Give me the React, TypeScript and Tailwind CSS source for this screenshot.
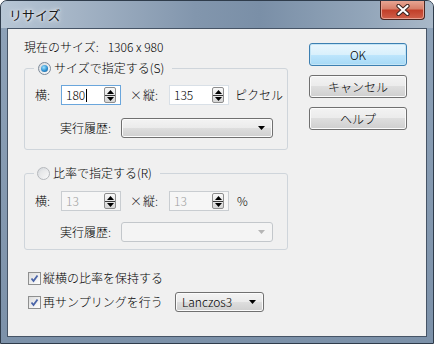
import React from "react";

function Spin() {
  return (
    <div className="w-[12px] h-[16px] flex flex-col border border-[#8d8d8d] rounded-[2px] bg-[linear-gradient(#f8f8f8,#d6d6d6)] shrink-0">
      <div className="h-[7px] flex items-center justify-center">
        <svg width="7" height="4" viewBox="0 0 7 4"><path d="M0 4L3.5 0L7 4Z" fill="#000" /></svg>
      </div>
      <div className="h-[1px] bg-[#3a3a3a]" />
      <div className="h-[6px] flex items-center justify-center">
        <svg width="7" height="4" viewBox="0 0 7 4"><path d="M0 0L3.5 4L7 0Z" fill="#000" /></svg>
      </div>
    </div>
  );
}

function NumInput({ value, focused, disabled, caret }: { value: string; focused?: boolean; disabled?: boolean; caret?: boolean }) {
  const border = focused ? "border-[#6aa6dc]" : disabled ? "border-[#c9cdd1]" : "border-[#d9e0e7]";
  return (
    <div className={`w-[60px] h-[20px] border ${border} ${disabled ? "bg-[#f6f6f6]" : "bg-white"} flex items-center pl-[4px] pr-[4px]`}>
      <span className={`flex-1 flex items-center text-[12px] leading-[16px] ${disabled ? "text-[#a0a0a0]" : "text-black"}`}>
        {value}
        {caret && <span className="inline-block w-[1px] h-[13px] bg-black ml-[1px]" />}
      </span>
      <Spin />
    </div>
  );
}

function Radio({ checked }: { checked?: boolean }) {
  return (
    <div className={`w-[13px] h-[13px] rounded-full border ${checked ? "border-[#7d8a99]" : "border-[#b5b8bc]"} bg-[linear-gradient(135deg,#d5d8dc,#fbfbfb)] flex items-center justify-center shrink-0`}>
      {checked ? (
        <div className="w-[7px] h-[7px] rounded-full bg-[radial-gradient(circle_at_40%_35%,#9fe3ff,#2d8fd0_55%,#184f84)]" />
      ) : (
        <div className="w-[7px] h-[7px] rounded-full bg-[linear-gradient(135deg,#e2e4e6,#f4f4f4)]" />
      )}
    </div>
  );
}

function Check() {
  return (
    <div className="w-[13px] h-[13px] border border-[#8e8f8f] bg-[linear-gradient(135deg,#dcdcdc,#ffffff)] flex items-center justify-center shrink-0">
      <svg width="9" height="9" viewBox="0 0 9 9">
        <path d="M1.5 4.5L3.5 7L7.5 1.5" stroke="#4a64a8" strokeWidth="1.8" fill="none" />
      </svg>
    </div>
  );
}

function Dropdown({ width, text, disabled }: { width: string; text?: string; disabled?: boolean }) {
  return (
    <div
      className={`${width} h-[20px] rounded-[3px] border flex items-center pl-[6px] pr-[7px] ${
        disabled
          ? "border-[#c3c7cb] bg-[#f4f4f4]"
          : "border-[#707070] bg-[linear-gradient(#f3f3f3_0%,#ebebeb_50%,#dedede_50%,#cfcfcf_100%)] shadow-[inset_0_0_0_1px_#fbfbfb]"
      }`}
    >
      <span className="flex-1 text-[12px] leading-[16px] text-black">{text}</span>
      <svg width="7" height="4" viewBox="0 0 7 4"><path d="M0 0L3.5 4L7 0Z" fill={disabled ? "#b5b5b5" : "#000"} /></svg>
    </div>
  );
}

function Btn({ label, primary }: { label: string; primary?: boolean }) {
  return (
    <div
      className={`w-[98px] h-[23px] rounded-[3px] border flex items-center justify-center text-[12px] leading-[16px] text-black ${
        primary
          ? "border-[#3c7fb1] bg-[linear-gradient(#eaf6fd_0%,#d9f0fc_50%,#bee6fd_50%,#a7d9f5_100%)] shadow-[inset_0_0_0_1px_#c4e5f6]"
          : "border-[#707070] bg-[linear-gradient(#f3f3f3_0%,#ebebeb_50%,#dedede_50%,#cfcfcf_100%)] shadow-[inset_0_0_0_1px_#fbfbfb]"
      }`}
    >
      {label}
    </div>
  );
}

export default function App() {
  return (
    <div className="w-[434px] h-[344px] flex flex-col rounded-t-[7px] border border-[#2f3c4b] bg-[linear-gradient(#8fa3b9,#7c91a9)] font-['Noto_Sans_CJK_JP',sans-serif] font-light overflow-hidden">
      <div className="h-[27px] flex items-start justify-between bg-[linear-gradient(90deg,#b7c6d5_0%,#a3b3c5_18%,#8296ad_45%,#7a8fa7_60%,#93a6ba_85%,#a9b8c8_100%)]">
        <div className="pl-[8px] pt-[5px] text-[13px] leading-[18px] font-normal text-[#1b1b1b] [text-shadow:0_0_6px_#ffffff,0_0_3px_#ffffff]">
          リサイズ
        </div>
        <div className="mr-[8px] w-[45px] h-[20px] -mt-[1px] rounded-b-[4px] border border-[#4a2620] border-t-0 bg-[linear-gradient(#e9aa98_0%,#d8806a_45%,#c2402a_55%,#d0604a_100%)] shadow-[inset_0_0_0_1px_#e8a090] flex items-center justify-center">
          <svg width="16" height="12" viewBox="0 0 16 12">
            <path d="M3.5 2L12.5 10M12.5 2L3.5 10" stroke="#3b2420" strokeWidth="4.2" strokeLinecap="round" />
            <path d="M3.5 2L12.5 10M12.5 2L3.5 10" stroke="#ffffff" strokeWidth="2.2" strokeLinecap="round" />
          </svg>
        </div>
      </div>
      <div className="mx-[6px] mb-[6px] flex-1 border border-[#465466] bg-[#f0f0f0] flex text-black">
        <div className="pl-[16px] pt-[10px] w-[280px] shrink-0 flex flex-col">
          <div className="h-[16px] text-[12px] leading-[16px] flex">
            <span>現在のサイズ:</span>
            <span className="ml-[9px]">1306 x 980</span>
          </div>

          <div className="relative mt-[13px] w-[264px] border border-[#cfd5db] rounded-[3px] pt-[16px] pb-[11px]">
            <div className="absolute left-[9px] -top-[9px] h-[16px] flex items-center gap-[3px] pl-[4px] pr-[8px] bg-[#f0f0f0] text-[12px] leading-[16px]">
              <Radio checked />
              <span>サイズで指定する(S)</span>
            </div>
            <div className="h-[20px] flex items-center pl-[10px] text-[12px] leading-[16px]">
              <span className="w-[26px]">横:</span>
              <NumInput value="180" focused caret />
              <span className="w-[13px] ml-[9px]">×</span>
              <span className="w-[26px]">縦:</span>
              <NumInput value="135" />
              <span className="ml-[6px]">ピクセル</span>
            </div>
            <div className="h-[20px] mt-[13px] flex items-center pl-[35px] text-[12px] leading-[16px]">
              <span className="w-[61px]">実行履歴:</span>
              <Dropdown width="w-[152px]" />
            </div>
          </div>

          <div className="relative mt-[23px] w-[264px] border border-[#cfd5db] rounded-[3px] pt-[17px] pb-[7px]">
            <div className="absolute left-[9px] -top-[9px] h-[16px] flex items-center gap-[3px] pl-[3px] pr-[8px] bg-[#f0f0f0] text-[12px] leading-[16px]">
              <Radio />
              <span>比率で指定する(R)</span>
            </div>
            <div className="h-[20px] flex items-center pl-[10px] text-[12px] leading-[16px]">
              <span className="w-[26px]">横:</span>
              <NumInput value="13" disabled />
              <span className="w-[13px] ml-[9px]">×</span>
              <span className="w-[26px]">縦:</span>
              <NumInput value="13" disabled />
              <span className="ml-[8px]">%</span>
            </div>
            <div className="h-[20px] mt-[11px] flex items-center pl-[35px] text-[12px] leading-[16px]">
              <span className="w-[61px]">実行履歴:</span>
              <Dropdown width="w-[152px]" disabled />
            </div>
          </div>

          <div className="mt-[20px] h-[16px] flex items-center gap-[2px] pl-[4px] text-[12px] leading-[16px]">
            <Check />
            <span>縦横の比率を保持する</span>
          </div>
          <div className="mt-[6px] h-[20px] flex items-center pl-[4px] text-[12px] leading-[16px]">
            <Check />
            <span className="ml-[2px] w-[132px]">再サンプリングを行う</span>
            <Dropdown width="w-[89px]" text="Lanczos3" />
          </div>
        </div>
        <div className="ml-[21px] pt-[14px] flex flex-col gap-[9px]">
          <Btn label="OK" primary />
          <Btn label="キャンセル" />
          <Btn label="ヘルプ" />
        </div>
      </div>
    </div>
  );
}
